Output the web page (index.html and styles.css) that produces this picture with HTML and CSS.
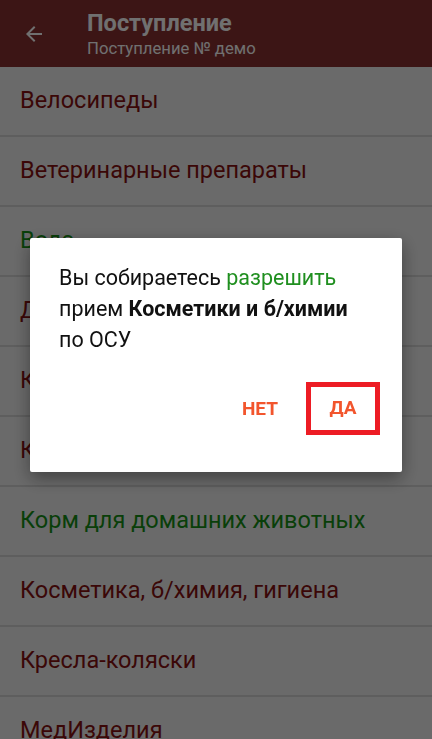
FILE: index.html
```html
<!DOCTYPE html>
<html lang="ru">
<head>
    <meta charset="UTF-8">
    <meta name="viewport" content="width=device-width, initial-scale=1.0">
    <title>Поступление</title>
    <link rel="stylesheet" href="styles.css">
</head>
<body>
    <header class="toolbar">
        <button class="back" aria-label="Назад">
            <svg width="24" height="24" viewBox="0 0 24 24">
                <path d="M20 11H7.83l5.59-5.59L12 4l-8 8 8 8 1.41-1.41L7.83 13H20v-2z" fill="#fff"/>
            </svg>
        </button>
        <div class="titles">
            <div class="title">Поступление</div>
            <div class="subtitle">Поступление № демо</div>
        </div>
    </header>

    <ul class="groups">
        <li>Велосипеды</li>
        <li>Ветеринарные препараты</li>
        <li class="allowed">Вода</li>
        <li>Детские товары</li>
        <li>Канцтовары</li>
        <li>Книги</li>
        <li class="allowed">Корм для домашних животных</li>
        <li>Косметика, б/химия, гигиена</li>
        <li>Кресла-коляски</li>
        <li>МедИзделия</li>
    </ul>

    <div class="scrim">
        <div class="dialog">
            <p class="message">
                Вы собираетесь <span class="allow">разрешить</span><br>
                прием <b>Косметики и б/химии</b><br>
                по ОСУ
            </p>
            <div class="actions">
                <button class="action">НЕТ</button>
                <button class="action marked">ДА</button>
            </div>
        </div>
    </div>
</body>
</html>
```

FILE: styles.css
```css
body {
    margin: 0;
    font-family: Roboto, 'Noto Sans', sans-serif;
    background-color: #f1f1f1;
    height: 739px;
    overflow: hidden;
}
.toolbar {
    display: flex;
    align-items: center;
    height: 67px;
    background-color: #883030;
    color: #fff;
}
.back {
    width: 68px;
    height: 67px;
    padding: 0 0 0 22px;
    border: none;
    background: none;
    display: flex;
    align-items: center;
}
.titles {
    padding-left: 19px;
    padding-top: 2px;
}
.title {
    font-size: 23.5px;
    font-weight: 700;
    line-height: 27px;
}
.subtitle {
    font-size: 16.7px;
    line-height: 23px;
}
.groups {
    list-style: none;
    margin: 0;
    padding: 0;
}
.groups li {
    height: 68px;
    line-height: 66px;
    padding-left: 20px;
    font-size: 23.5px;
    color: #861010;
    border-bottom: 2px solid #d6d6d6;
    white-space: nowrap;
}
.groups li.allowed {
    color: #169016;
}
.scrim {
    position: fixed;
    inset: 0;
    background-color: rgba(0, 0, 0, 0.56);
    padding: 238px 30px 0;
}
.dialog {
    background-color: #fff;
    border-radius: 2px;
    box-shadow: 0 6px 18px rgba(0, 0, 0, 0.4);
    padding: 24px 22px 32px 29px;
    height: 234px;
    box-sizing: border-box;
}
.message {
    margin: 0;
    font-size: 21.5px;
    line-height: 31px;
    color: #111;
}
.allow {
    color: #1f8f1f;
}
.actions {
    display: flex;
    justify-content: flex-end;
    align-items: center;
    gap: 28px;
    margin-top: 27px;
}
.action {
    border: none;
    background: none;
    padding: 0;
    font-family: Roboto, sans-serif;
    font-size: 19px;
    font-weight: 700;
    color: #f2552d;
}
.marked {
    width: 74px;
    height: 53px;
    border: 5px solid #ed1c24;
    padding-bottom: 2px;
}
```
